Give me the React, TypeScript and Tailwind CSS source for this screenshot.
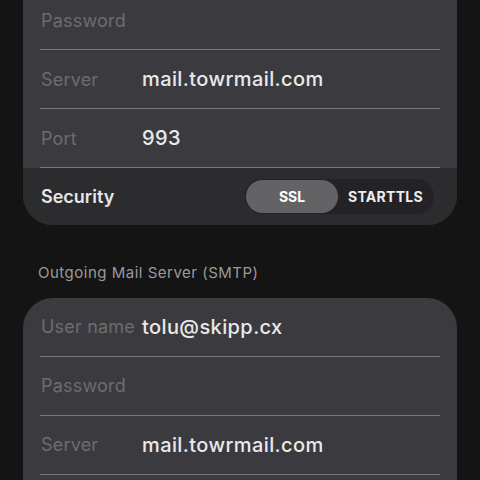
const rowBase = "flex h-[58px] items-center px-[18px]";

function Divider() {
  return <div className="mx-[17px] h-px bg-[#77777b]" />;
}

function Field({ label, value }: { label: string; value?: string }) {
  return (
    <div className={rowBase}>
      <span className="w-[101px] shrink-0 text-[18px] tracking-[0.2px] text-[#6c6c70]">{label}</span>
      {value ? (
        <span className="text-[20px] font-medium tracking-[0.4px] text-[#e9e9eb]">{value}</span>
      ) : null}
    </div>
  );
}

export default function App() {
  return (
    <div
      className="h-[480px] w-[480px] overflow-hidden bg-[#141414] px-[23px]"
      style={{ fontFamily: "Inter, 'Noto Sans', sans-serif" }}
    >
      <div className="-mt-[9px] overflow-hidden rounded-b-[30px] bg-[#3b3b3f]">
        <Field label="Password" />
        <Divider />
        <Field label="Server" value="mail.towrmail.com" />
        <Divider />
        <Field label="Port" value="993" />
        <Divider />
        <div className="flex h-[57px] items-center justify-between bg-[#2c2c2e] pl-[18px] pr-[23px]">
          <span className="text-[18px] font-semibold text-[#e6e6e8]">Security</span>
          <div className="flex h-[35px] w-[189px] items-center rounded-full bg-[#232325] p-[1px]">
            <div className="flex h-full w-[92px] items-center justify-center rounded-full bg-[#636366] text-[14px] font-bold text-white">
              SSL
            </div>
            <div className="flex flex-1 items-center justify-center text-[14px] font-bold tracking-[0.3px] text-[#ededef]">
              STARTTLS
            </div>
          </div>
        </div>
      </div>

      <p className="mt-[37px] px-[15px] text-[15px] tracking-[0.5px] text-[#9a9a9e]">Outgoing Mail Server (SMTP)</p>

      <div className="mt-[13px] overflow-hidden rounded-t-[30px] bg-[#3b3b3f]">
        <Field label="User name" value="tolu@skipp.cx" />
        <Divider />
        <Field label="Password" />
        <Divider />
        <Field label="Server" value="mail.towrmail.com" />
        <Divider />
        <div className="h-[40px]" />
      </div>
    </div>
  );
}
